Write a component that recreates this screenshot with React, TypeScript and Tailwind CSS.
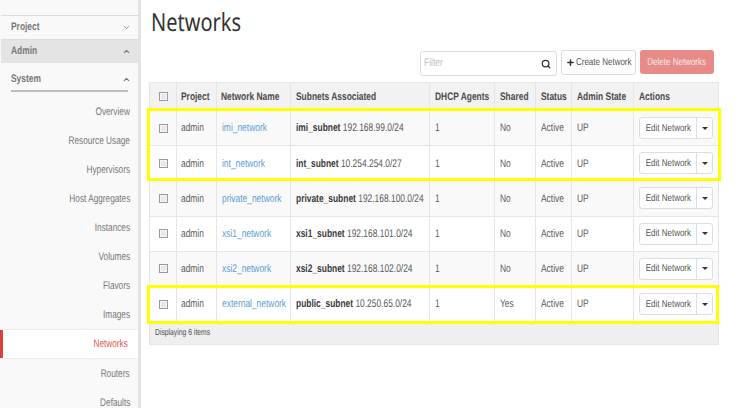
import type { ReactNode } from "react"
import { ChevronDown, ChevronUp, Search, Plus } from "lucide-react"

const networks = [
  { name: "imi_network", subnet: "imi_subnet", cidr: "192.168.99.0/24", shared: "No", alt: true },
  { name: "int_network", subnet: "int_subnet", cidr: "10.254.254.0/27", shared: "No", alt: false },
  { name: "private_network", subnet: "private_subnet", cidr: "192.168.100.0/24", shared: "No", alt: true },
  { name: "xsi1_network", subnet: "xsi1_subnet", cidr: "192.168.101.0/24", shared: "No", alt: false },
  { name: "xsi2_network", subnet: "xsi2_subnet", cidr: "192.168.102.0/24", shared: "No", alt: true },
  { name: "external_network", subnet: "public_subnet", cidr: "10.250.65.0/24", shared: "Yes", alt: false },
]

const links = ["Overview", "Resource Usage", "Hypervisors", "Host Aggregates", "Instances", "Volumes", "Flavors", "Images", "Networks", "Routers", "Defaults"]

const headers = ["Project", "Network Name", "Subnets Associated", "DHCP Agents", "Shared", "Status", "Admin State"]

const cols = "grid grid-cols-[27px_40px_74px_139px_65px_41px_36px_62px_84px]"

// the screenshot is squeezed horizontally, so the text is too
function L({ children }: { children: ReactNode }) {
  return <span className="inline-block origin-left scale-x-[0.765] whitespace-nowrap">{children}</span>
}
function R({ children }: { children: ReactNode }) {
  return <span className="inline-block origin-right scale-x-[0.75] whitespace-nowrap">{children}</span>
}
function C({ children }: { children: ReactNode }) {
  return <span className="inline-block origin-center scale-x-[0.8] whitespace-nowrap">{children}</span>
}

function Checkbox() {
  return <span className="block h-[9px] w-[9px] border border-[#9a9a9a] bg-[#e9e9e9] shadow-[inset_0_0_0_1px_#f6f6f6]" />
}

function Sidebar() {
  return (
    <aside className="h-[408px] w-[141px] shrink-0 overflow-hidden border-r-[3px] border-[#e3e3e3] bg-[#f9f9f9] pl-px text-[#777777]">
      <div className="h-[16px] border-b border-[#dcdcdc]" />
      <div className="flex h-[24px] items-center justify-between border-b border-[#dddddd] pl-[10px] pr-[7px] text-[11px] font-bold">
        <L>Project</L>
        <ChevronDown className="h-[9px] w-[9px]" strokeWidth={2} />
      </div>
      <div className="flex h-[23px] items-center justify-between bg-[#e4e4e4] pl-[10px] pr-[7px] text-[11px] font-bold">
        <L>Admin</L>
        <ChevronUp className="h-[9px] w-[9px]" strokeWidth={3} />
      </div>
      <div className="mx-[10px] flex h-[29px] items-center justify-between border-b-2 border-[#bdbdbd] pt-[6px] text-[11px] font-bold">
        <L>System</L>
        <ChevronUp className="mr-[-3px] h-[9px] w-[9px]" strokeWidth={3} />
      </div>
      <nav className="mt-[5px] flex flex-col text-[11px]">
        {links.map((l) =>
          l === "Networks" ? (
            <a key={l} className="my-px ml-[-1px] flex h-[28px] items-center justify-end border-l-[3px] border-[#d9413a] bg-white pr-[10px] text-[#e5554f] shadow-[0_0_2px_#d5d5d5]">
              <R>{l}</R>
            </a>
          ) : (
            <a key={l} className="flex h-[29px] items-center justify-end pr-[8px] pt-px">
              <R>{l}</R>
            </a>
          )
        )}
      </nav>
    </aside>
  )
}

function Row({ n }: { n: (typeof networks)[number] }) {
  const cell = "flex items-center border-r border-[#e6e6e6] pl-[5px] pt-px"
  return (
    <div className={`${cols} h-[35.2px] border-b border-[#e6e6e6] ${n.alt ? "bg-[#f9f9f9]" : "bg-white"}`}>
      <div className="flex items-center border-r border-[#e6e6e6] pl-[9px]"><Checkbox /></div>
      <div className="flex items-center border-r border-[#e6e6e6] pl-[4px] pt-px"><L>admin</L></div>
      <div className={`${cell} text-[#5b9bd5]`}><L>{n.name}</L></div>
      <div className={cell}><L><b className="text-[#3a3a3a]">{n.subnet}</b> {n.cidr}</L></div>
      <div className={cell}><L>1</L></div>
      <div className={cell}><L>{n.shared}</L></div>
      <div className={cell}><L>Active</L></div>
      <div className={cell}><L>UP</L></div>
      <div className="flex items-center pl-[5px]">
        <div className="flex h-[22px] w-[74px] items-center rounded-[3px] border border-[#dedede] bg-white text-[10px] text-[#555555]">
          <span className="flex h-full w-[57px] items-center justify-center border-r border-[#dedede]"><C>Edit Network</C></span>
          <span className="ml-[5px] h-0 w-0 border-x-[3px] border-t-[3px] border-x-transparent border-t-[#333333]" />
        </div>
      </div>
    </div>
  )
}

export default function App() {
  return (
    <div className="relative flex h-[418px] w-[752px] items-start overflow-hidden bg-white font-['Liberation_Sans',sans-serif] text-[11px] text-[#5a5a5a] [text-rendering:geometricPrecision]">
      <Sidebar />
      <main className="min-w-0 flex-1 pl-[8px]">
        <div className="pl-[2px] pt-[5px] pb-px font-['Noto_Sans',sans-serif] text-[25px] leading-[34px] text-[#333333]"><L><span className="inline-block scale-x-[1.045] origin-left">Networks</span></L></div>
        <div className="mt-[10px] flex h-[25px] w-[565px] items-start justify-end gap-[4px]">
          <div className="mt-px flex h-[25px] w-[137px] items-center justify-between rounded-[3px] border border-[#dcdcdc] pl-[3px] pr-[5px] text-[#c0c0c0]">
            <L>Filter</L>
            <Search className="h-[10px] w-[10px] text-[#333333]" strokeWidth={3} />
          </div>
          <div className="flex h-[25px] w-[75px] items-center justify-start rounded-[3px] border border-[#dcdcdc] pl-[4px] text-[10px] text-[#555555]">
            <Plus className="mr-[-6px] h-[9px] w-[9px] shrink-0 text-[#333333]" strokeWidth={4} />
            <C>Create Network</C>
          </div>
          <div className="flex h-[24px] w-[74px] items-center justify-center rounded-[3px] bg-[#e78b88] text-[10px] text-[#fbe9e8]"><C>Delete Networks</C></div>
        </div>
        <div className="mt-[7px] w-[570px] border-x border-b border-[#e6e6e6]">
          <div className={`${cols} h-[29px] border-y border-[#e6e6e6] bg-[#f2f2f2] font-bold text-[#4a4a4a]`}>
            <div className="flex items-center border-r border-[#e6e6e6] pl-[9px]"><Checkbox /></div>
            {headers.map((h, i) => (
              <div key={h} className={`flex items-center border-r border-[#e6e6e6] pt-px ${i < 2 ? "pl-[4px]" : "pl-[5px]"}`}><L>{h}</L></div>
            ))}
            <div className="flex items-center pl-[5px] pt-px"><L>Actions</L></div>
          </div>
          {networks.map((n) => <Row key={n.name} n={n} />)}
          <div className="flex h-[22px] items-center bg-[#efefef] pl-[5px] text-[8.9px] text-[#4a4a4a]"><L>Displaying 6 items</L></div>
        </div>
      </main>
      {/* yellow highlight boxes drawn on top of the table */}
      <div className="absolute left-[147px] top-[108px] h-[73px] w-[574px] border-[3px] border-[#ffff00]" />
      <div className="absolute left-[147px] top-[285px] h-[39px] w-[572px] border-[3px] border-[#ffff00]" />
    </div>
  )
}
